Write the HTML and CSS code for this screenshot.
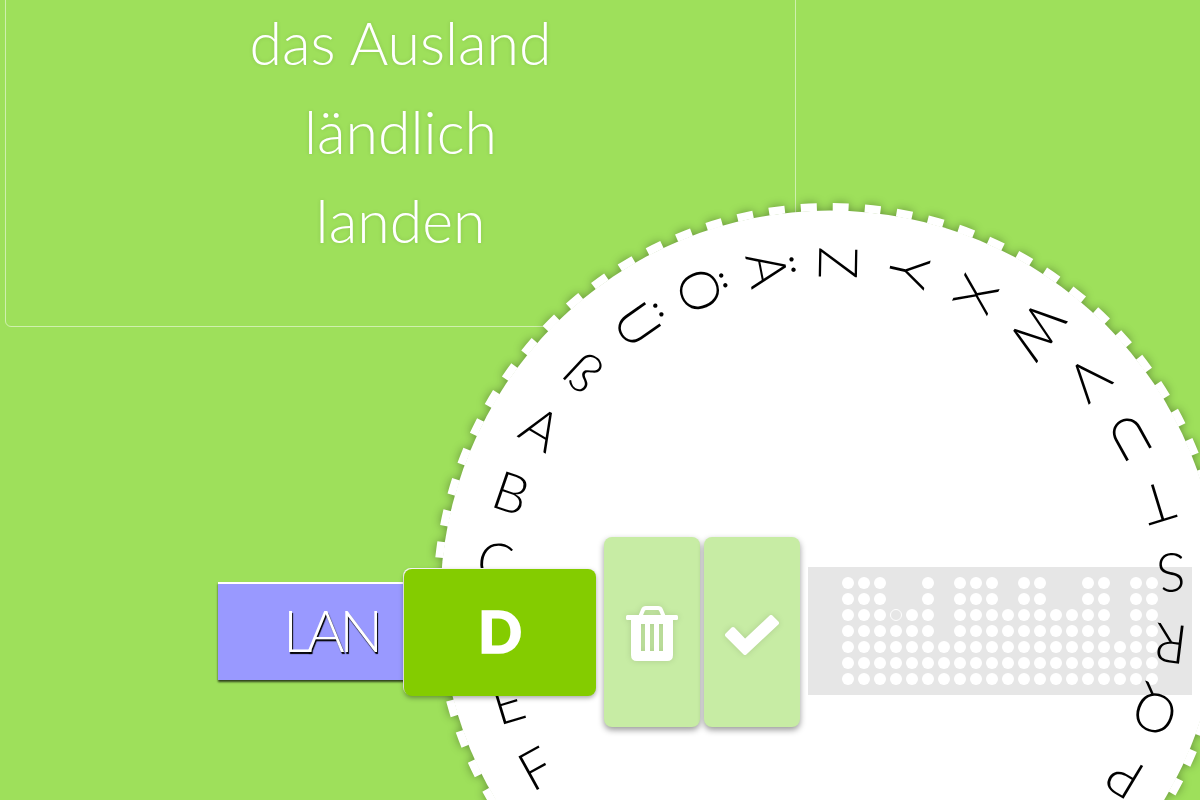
FILE: index.html

```html
<!DOCTYPE html>
<html lang="de">
<head>
  <meta charset="UTF-8">
  <title>Buchstabenrad</title>
  <link rel="stylesheet" href="styles.css">
</head>
<body>
  <div class="card">
    <p>das Ausland</p>
    <p>ländlich</p>
    <p>landen</p>
  </div>

  <div class="wheel">
    <svg class="disc" width="794" height="794" viewBox="0 0 794 794">
      <circle cx="397" cy="397" r="389.500" fill="#fff"/>
      <circle cx="397" cy="397" r="393" fill="none" stroke="#fff" stroke-width="8" stroke-dasharray="16 16.07" stroke-dashoffset="-26"/>
    </svg>
    <span class="letter" style="--a:-59deg">A</span>
    <span class="letter" style="--a:-71deg">B</span>
    <span class="letter" style="--a:-83deg">C</span>
    <span class="letter" style="--a:-95deg">D</span>
    <span class="letter" style="--a:-107deg">E</span>
    <span class="letter" style="--a:-119deg">F</span>
    <span class="letter" style="--a:121deg">P</span>
    <span class="letter" style="--a:109deg">Q</span>
    <span class="letter" style="--a:97deg">R</span>
    <span class="letter" style="--a:85deg">S</span>
    <span class="letter" style="--a:73deg">T</span>
    <span class="letter" style="--a:61deg">U</span>
    <span class="letter" style="--a:49deg">V</span>
    <span class="letter" style="--a:37deg">W</span>
    <span class="letter" style="--a:25deg">X</span>
    <span class="letter" style="--a:13deg">Y</span>
    <span class="letter" style="--a:1deg">Z</span>
    <span class="letter" style="--a:-11deg">Ä</span>
    <span class="letter" style="--a:-23deg">Ö</span>
    <span class="letter" style="--a:-35deg">Ü</span>
    <span class="letter" style="--a:-47deg">ß</span>
  </div>

  <div class="controls">
    <div class="word">LAN</div>
    <div class="current">D</div>
    <button class="action">
      <svg width="52" height="56" viewBox="0 0 52 56">
        <path d="M14.500 10 L17 4 Q17.800 2 20 2 L32 2 Q34.200 2 35 4 L37.500 10" fill="none" stroke="#fff" stroke-width="4"/>
        <rect x="0" y="9" width="52" height="5" rx="1.500" fill="#fff"/>
        <path fill-rule="evenodd" fill="#fff" d="M5 13 H47 V49 Q47 55 41 55 H11 Q5 55 5 49 Z M15 18 V45 H19 V18 Z M24 18 V45 H28 V18 Z M33 18 V45 H37 V18 Z"/>
      </svg>
    </button>
    <button class="action">
      <svg width="56" height="43" viewBox="0 0 56 43">
        <polygon points="3,22 9,16 21,28.500 47,4 53,10 21,40" fill="#fff" stroke="#fff" stroke-width="4" stroke-linejoin="round"/>
      </svg>
    </button>
    <div class="dots">
      <i></i><i></i><i></i><i class="e"></i><i class="e"></i><i></i><i class="e"></i><i></i><i></i><i></i><i class="e"></i><i></i><i></i><i class="e"></i><i class="e"></i><i></i><i></i><i class="e"></i><i></i><i></i>
      <i></i><i></i><i></i><i class="e"></i><i class="e"></i><i></i><i class="e"></i><i></i><i></i><i></i><i class="e"></i><i></i><i></i><i class="e"></i><i class="e"></i><i></i><i></i><i class="e"></i><i></i><i></i>
      <i></i><i></i><i></i><i class="r"></i><i></i><i></i><i class="e"></i><i></i><i></i><i></i><i></i><i></i><i></i><i></i><i></i><i></i><i></i><i class="e"></i><i></i><i></i>
      <i></i><i></i><i></i><i></i><i></i><i></i><i class="e"></i><i></i><i></i><i></i><i></i><i></i><i></i><i></i><i></i><i></i><i></i><i class="e"></i><i></i><i></i>
      <i></i><i></i><i></i><i></i><i></i><i></i><i></i><i></i><i></i><i></i><i></i><i></i><i></i><i></i><i></i><i></i><i></i><i></i><i></i><i></i>
      <i></i><i></i><i></i><i></i><i></i><i></i><i></i><i></i><i></i><i></i><i></i><i></i><i></i><i></i><i></i><i></i><i></i><i></i><i></i><i></i>
      <i></i><i></i><i></i><i></i><i></i><i></i><i></i><i></i><i></i><i></i><i></i><i></i><i></i><i></i><i></i><i></i><i></i><i></i><i></i><i></i>
    </div>
  </div>
</body>
</html>
```

FILE: styles.css

```css
html, body {
  height: 800px;
  overflow: hidden;
}
body {
  background-color: #9ee05b;
  font-family: Lato, "Noto Sans", sans-serif;
  margin: 0;
  padding: 0 0 0 5px;
}
.card {
  box-sizing: border-box;
  width: 791px;
  height: 367px;
  margin-top: -40px;
  padding-top: 37px;
  border: 1px solid rgba(255,255,255,0.5);
  border-radius: 6px;
  text-align: center;
  color: white;
  font-weight: 300;
  font-size: 59px;
  line-height: 89px;
  text-shadow: 0 0 4px rgba(0,0,0,0.12);
}
.card p {
  margin: 0;
}
.wheel {
  position: absolute;
  left: 433px;
  top: 203px;
  width: 794px;
  height: 794px;
}
.disc {
  display: block;
  filter: drop-shadow(0 0 5px rgba(0,0,0,0.35));
}
.letter {
  position: absolute;
  left: calc(50% + 3px);
  top: calc(50% + 3px);
  width: 60px;
  height: 60px;
  margin: -30px 0 0 -30px;
  text-align: center;
  color: black;
  font-weight: 300;
  font-size: 54px;
  line-height: 60px;
  transform: rotate(var(--a)) translateY(-340px) rotate(90deg);
}
.controls {
  position: relative;
  display: flex;
  align-items: center;
  height: 190px;
  margin: 210px 0 0 213px;
}
.word {
  box-sizing: border-box;
  width: 192px;
  height: 98px;
  margin-right: -6px;
  margin-bottom: 2px;
  padding-left: 65px;
  background-color: #9999ff;
  border-top: 2px solid white;
  box-shadow: 0 2px 2px rgba(0,0,0,0.7);
  color: white;
  font-weight: 300;
  font-size: 58px;
  line-height: 92px;
  letter-spacing: -5.500px;
  text-shadow: 1px 2px 1px black;
}
.current {
  position: relative;
  width: 192px;
  height: 127px;
  margin-right: 8px;
  background-color: #84cc00;
  border-radius: 8px;
  box-shadow: 0 2px 5px rgba(0,0,0,0.35), -1px -1px 0 white;
  text-align: center;
  color: white;
  font-weight: 900;
  font-size: 58px;
  line-height: 124px;
  -webkit-text-stroke: 1.500px white;
}
.action {
  display: flex;
  align-items: center;
  justify-content: center;
  width: 96px;
  height: 190px;
  margin-right: 4px;
  padding: 4px 0 0;
  border: none;
  border-radius: 8px;
  background-color: #c7eca4;
  box-shadow: 0 3px 6px rgba(0,0,0,0.4), 0 -1px 0 white;
}
.action svg {
  filter: drop-shadow(0 0 3px rgba(0,0,0,0.12));
}
.dots {
  display: grid;
  grid-template-columns: repeat(20, 12px);
  gap: 4px;
  box-sizing: border-box;
  width: 384px;
  height: 128px;
  padding: 10px 34px;
  margin: 0 0 2px 4px;
  background-color: #e6e6e6;
  mix-blend-mode: multiply;
}
.dots i {
  box-sizing: border-box;
  width: 12px;
  height: 12px;
  border-radius: 50%;
  background-color: white;
}
.dots i.e {
  background-color: transparent;
}
.dots i.r {
  background-color: transparent;
  border: 1px solid white;
}
```
